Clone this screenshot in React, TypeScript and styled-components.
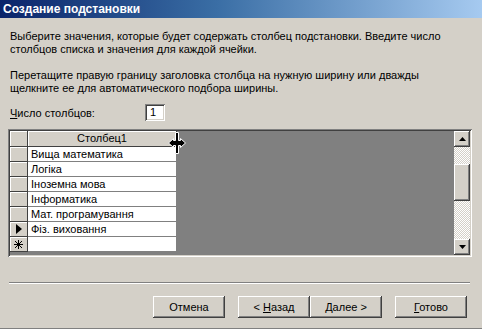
import styled, { createGlobalStyle } from 'styled-components'

const GlobalStyle = createGlobalStyle`
  html, body {
    margin: 0;
    padding: 0;
    background: #d4d0c8;
  }
  body {
    font-family: 'Liberation Sans', Arial, sans-serif;
    font-size: 11px;
    color: #000;
  }
`

const rows = [
  'Вища математика',
  'Логіка',
  'Іноземна мова',
  'Інформатика',
  'Мат. програмування',
  'Фіз. виховання',
]

const raised = `
  box-shadow: inset -1px -1px #404040, inset 1px 1px #ffffff,
    inset -2px -2px #808080, inset 2px 2px #d4d0c8;
`

const sunken = `
  box-shadow: inset 1px 1px #808080, inset -1px -1px #ffffff,
    inset 2px 2px #404040, inset -2px -2px #d4d0c8;
`

export default function App() {
  return (
    <>
      <GlobalStyle />
      <Window>
        <TitleBar>Создание подстановки</TitleBar>
        <Body>
          <Paragraph>
            Выберите значения, которые будет содержать столбец подстановки. Введите число
            <br />
            столбцов списка и значения для каждой ячейки.
          </Paragraph>
          <Paragraph>
            Перетащите правую границу заголовка столбца на нужную ширину или дважды
            <br />
            щелкните ее для автоматического подбора ширины.
          </Paragraph>
          <CountRow>
            <Label>
              <u>Ч</u>исло столбцов:
            </Label>
            <CountInput>1</CountInput>
          </CountRow>
          <GridFrame>
            <Sheet>
              <Table>
                <TableRow>
                  <Selector />
                  <HeaderCell>Столбец1</HeaderCell>
                </TableRow>
                {rows.map((r, i) => (
                  <TableRow key={r}>
                    <Selector>{i === rows.length - 1 && <Arrow />}</Selector>
                    <Cell>{r}</Cell>
                  </TableRow>
                ))}
                <TableRow>
                  <Selector>
                    <svg width="9" height="9" viewBox="0 0 9 9">
                      <path
                        d="M4.5 0v9M0 4.5h9M1 1l7 7M8 1L1 8"
                        stroke="#000"
                        strokeWidth="1"
                      />
                    </svg>
                  </Selector>
                  <Cell />
                </TableRow>
              </Table>
              <ResizeCursor width="20" height="22" viewBox="0 0 20 22">
                <path
                  d="M8.5 0.5h3v8h2V6.5l5 4.5-5 4.5V13.5h-2v8h-3v-8h-2v2l-5-4.5 5-4.5v2h2z"
                  fill="#000"
                  stroke="#fff"
                  strokeWidth="1"
                />
              </ResizeCursor>
            </Sheet>
            <ScrollBar>
              <ScrollButton>
                <svg width="7" height="4" viewBox="0 0 7 4">
                  <path d="M3.5 0L7 4H0z" fill="#000" />
                </svg>
              </ScrollButton>
              <Track>
                <Thumb />
              </Track>
              <ScrollButton>
                <svg width="7" height="4" viewBox="0 0 7 4">
                  <path d="M0 0h7L3.5 4z" fill="#000" />
                </svg>
              </ScrollButton>
            </ScrollBar>
          </GridFrame>
        </Body>
        <Separator />
        <ButtonBar>
          <Button>Отмена</Button>
          <ButtonPair>
            <Button>
              &lt; <u>Н</u>азад
            </Button>
            <Button>
              <u>Д</u>алее &gt;
            </Button>
          </ButtonPair>
          <Button>
            <u>Г</u>отово
          </Button>
        </ButtonBar>
      </Window>
    </>
  )
}

const Window = styled.div`
  width: 482px;
  height: 329px;
  box-sizing: border-box;
  background: #d4d0c8;
  border-bottom: 1px solid #808080;
  display: flex;
  flex-direction: column;
`

const TitleBar = styled.div`
  height: 18px;
  line-height: 18px;
  padding-left: 3px;
  color: #fff;
  font-weight: bold;
  font-size: 12px;
  background: linear-gradient(to right, #0a246a, #3a6ea5 45%, #a6caf0);
`

const Body = styled.div`
  padding: 12px 10px 0 8px;
  display: flex;
  flex-direction: column;
`

const Paragraph = styled.p`
  margin: 0 0 13px 2px;
  line-height: 13px;
  white-space: nowrap;
`

const CountRow = styled.div`
  display: flex;
  align-items: center;
  height: 17px;
  margin: -4px 0 8px 2px;
`

const Label = styled.span`
  width: 135px;
`

const CountInput = styled.div`
  width: 20px;
  height: 17px;
  box-sizing: border-box;
  background: #fff;
  padding: 2px 0 0 5px;
  line-height: 13px;
  ${sunken}
`

const GridFrame = styled.div`
  height: 128px;
  box-sizing: border-box;
  padding: 2px;
  display: flex;
  ${sunken}
`

const Sheet = styled.div`
  position: relative;
  flex: 1;
  background: #808080;
`

const Table = styled.div`
  width: 167px;
  display: flex;
  flex-direction: column;
`

const TableRow = styled.div`
  display: flex;
  height: 15px;

  &:first-child {
    height: 16px;
  }
`

const Selector = styled.div`
  width: 18px;
  box-sizing: border-box;
  background: #d4d0c8;
  border-right: 1px solid #404040;
  border-bottom: 1px solid #404040;
  box-shadow: inset 1px 1px #ffffff;
  display: flex;
  align-items: center;
  justify-content: center;
`

const HeaderCell = styled.div`
  flex: 1;
  box-sizing: border-box;
  background: #d4d0c8;
  border-right: 1px solid #404040;
  border-bottom: 1px solid #404040;
  box-shadow: inset 1px 1px #ffffff;
  text-align: center;
  line-height: 15px;
`

const Cell = styled.div`
  flex: 1;
  box-sizing: border-box;
  background: #fff;
  border-right: 1px solid #808080;
  border-bottom: 1px solid #808080;
  padding-left: 3px;
  line-height: 14px;
  white-space: nowrap;
`

const Arrow = styled.span`
  width: 0;
  height: 0;
  border-top: 5px solid transparent;
  border-bottom: 5px solid transparent;
  border-left: 6px solid #000;
  margin-left: 1px;
`

const ResizeCursor = styled.svg`
  position: absolute;
  left: 157px;
  top: 1px;
`

const ScrollBar = styled.div`
  width: 16px;
  display: flex;
  flex-direction: column;
`

const ScrollButton = styled.div`
  height: 16px;
  background: #d4d0c8;
  display: flex;
  align-items: center;
  justify-content: center;
  ${raised}
`

const Track = styled.div`
  flex: 1;
  padding-top: 17px;
  background-image: conic-gradient(#ffffff 25%, #d4d0c8 0 50%, #ffffff 0 75%, #d4d0c8 0);
  background-size: 2px 2px;
`

const Thumb = styled.div`
  height: 37px;
  background: #d4d0c8;
  ${raised}
`

const Separator = styled.div`
  margin: 25px 12px 0 9px;
  height: 0;
  border-top: 1px solid #808080;
  border-bottom: 1px solid #ffffff;
`

const ButtonBar = styled.div`
  display: flex;
  justify-content: flex-end;
  gap: 13px;
  padding: 12px 15px 0 0;
`

const ButtonPair = styled.div`
  display: flex;
`

const Button = styled.button`
  width: 72px;
  height: 22px;
  border: none;
  padding: 0;
  background: #d4d0c8;
  font-family: 'Liberation Sans', Arial, sans-serif;
  font-size: 11px;
  color: #000;
  ${raised}
`
